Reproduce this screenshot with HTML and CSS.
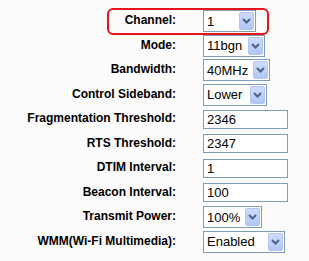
FILE: index.html
```html
<!DOCTYPE html>
<html lang="en">
<head>
  <meta charset="UTF-8" />
  <title>Wireless Advanced</title>
  <link rel="stylesheet" href="styles.css">
</head>
<body>

<div class="form">
  <div class="highlight"></div>

  <label>Channel:</label>
  <div class="select w-channel"><span class="val">1</span><span class="arrow"><svg width="9" height="6" viewBox="0 0 9 6"><path d="M1 1 L4.5 4.5 L8 1" fill="none" stroke="#4d6185" stroke-width="2"/></svg></span></div>

  <label>Mode:</label>
  <div class="select w-mode"><span class="val">11bgn</span><span class="arrow"><svg width="9" height="6" viewBox="0 0 9 6"><path d="M1 1 L4.5 4.5 L8 1" fill="none" stroke="#4d6185" stroke-width="2"/></svg></span></div>

  <label>Bandwidth:</label>
  <div class="select w-band"><span class="val">40MHz</span><span class="arrow"><svg width="9" height="6" viewBox="0 0 9 6"><path d="M1 1 L4.5 4.5 L8 1" fill="none" stroke="#4d6185" stroke-width="2"/></svg></span></div>

  <label>Control Sideband:</label>
  <div class="select w-side"><span class="val">Lower</span><span class="arrow"><svg width="9" height="6" viewBox="0 0 9 6"><path d="M1 1 L4.5 4.5 L8 1" fill="none" stroke="#4d6185" stroke-width="2"/></svg></span></div>

  <label>Fragmentation Threshold:</label>
  <input class="text" type="text" value="2346" />

  <label>RTS Threshold:</label>
  <input class="text" type="text" value="2347" />

  <label>DTIM Interval:</label>
  <input class="text" type="text" value="1" />

  <label>Beacon Interval:</label>
  <input class="text" type="text" value="100" />

  <label>Transmit Power:</label>
  <div class="select w-power"><span class="val">100%</span><span class="arrow"><svg width="9" height="6" viewBox="0 0 9 6"><path d="M1 1 L4.5 4.5 L8 1" fill="none" stroke="#4d6185" stroke-width="2"/></svg></span></div>

  <label>WMM(Wi-Fi Multimedia):</label>
  <div class="select w-wmm"><span class="val">Enabled</span><span class="arrow"><svg width="9" height="6" viewBox="0 0 9 6"><path d="M1 1 L4.5 4.5 L8 1" fill="none" stroke="#4d6185" stroke-width="2"/></svg></span></div>
</div>

</body>
</html>
```

FILE: styles.css
```css
body {
  margin: 0;
  background: #fbfbfb;
  font-family: "Liberation Sans", Arial, sans-serif;
  color: #000;
}
.form {
  position: relative;
  display: grid;
  grid-template-columns: 176px auto;
  grid-auto-rows: 24.5px;
  column-gap: 27px;
  align-items: center;
  justify-items: start;
  padding-top: 9px;
}
.form label {
  justify-self: end;
  font-size: 12px;
  font-weight: bold;
  margin-top: -2px;
}
.highlight {
  position: absolute;
  left: 107px;
  top: 8px;
  width: 158px;
  height: 23px;
  border: 2px solid #e8141b;
  border-radius: 6px;
}
.select {
  display: flex;
  align-items: stretch;
  box-sizing: border-box;
  height: 22px;
  border: 1px solid #7f9db9;
  background: #fff;
  font-size: 13px;
}
.select .val {
  flex: 1;
  display: flex;
  align-items: center;
  padding-left: 3px;
}
.select .arrow {
  display: flex;
  align-items: center;
  justify-content: center;
  width: 15px;
  margin: 1px;
  border: 1px solid #b4c6f0;
  border-radius: 2px;
  box-sizing: border-box;
  background: linear-gradient(#cddcfd, #b1c6f6);
}
.w-channel { width: 53px; }
.w-mode { width: 62px; }
.w-band { width: 67px; }
.w-side { width: 64px; }
.w-power { width: 59px; }
.w-wmm { width: 82px; }
.text {
  box-sizing: border-box;
  width: 85px;
  height: 19px;
  margin: 0;
  padding: 0 3px;
  border: 1px solid #7f9db9;
  background: #fff;
  font-family: "Liberation Sans", Arial, sans-serif;
  font-size: 13px;
  color: #000;
}
```
